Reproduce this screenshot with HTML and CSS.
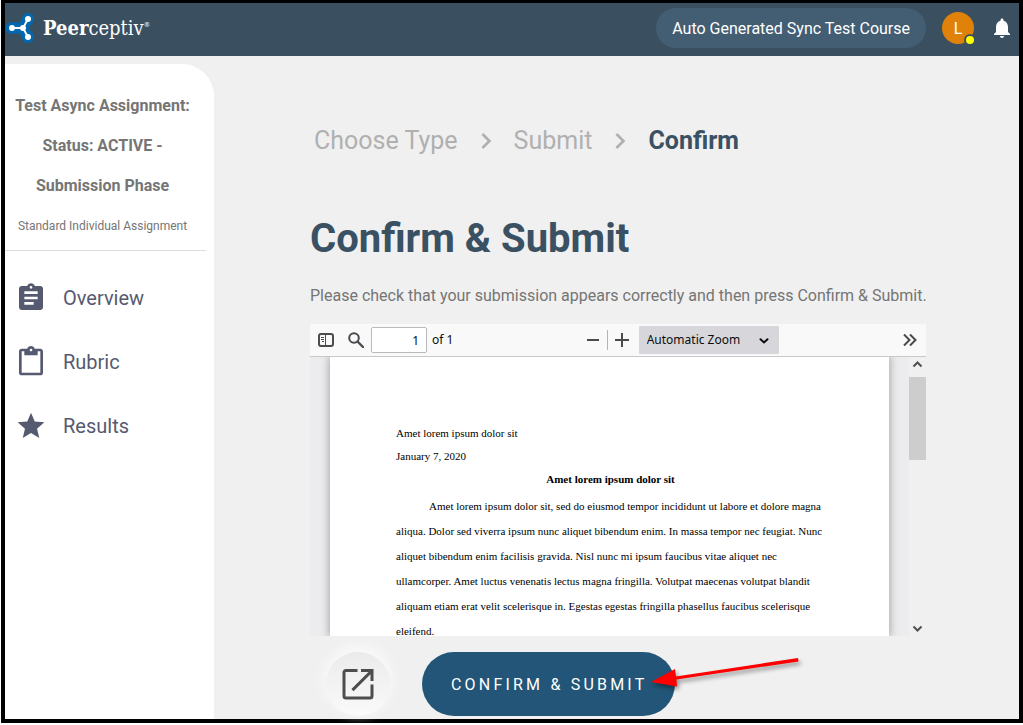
FILE: index.html
```html
<!DOCTYPE html>
<html lang="en">
<head>
<meta charset="utf-8">
<title>Peerceptiv - Confirm &amp; Submit</title>
<link rel="stylesheet" href="styles.css">
</head>
<body>
<div class="frame">
  <header class="topbar">
    <a class="brand" href="#">
      <svg class="brand-mark" viewBox="0 0 30 32" aria-hidden="true">
        <path d="M6 16 L18 16 Q21 10 23 7 M18 16 Q21 22 23 25" fill="none" stroke="#0568ae" stroke-width="11" stroke-linecap="round" stroke-linejoin="round"/>
        <circle cx="7" cy="16" r="6" fill="#0568ae"/>
        <circle cx="23" cy="7" r="6" fill="#0568ae"/>
        <circle cx="23" cy="25" r="6" fill="#0568ae"/>
        <path d="M7 16 H18 L23 7 M18 16 L23 25" fill="none" stroke="#fff" stroke-width="2"/>
        <circle cx="7" cy="16" r="3" fill="#fff"/>
        <circle cx="18" cy="16" r="3" fill="#fff"/>
        <circle cx="23" cy="7" r="3" fill="#fff"/>
        <circle cx="23" cy="25" r="3" fill="#fff"/>
      </svg>
      <span class="brand-name"><b>Peer</b>ceptiv<sup>®</sup></span>
    </a>
    <div class="top-actions">
      <button class="course" type="button">Auto Generated Sync Test Course</button>
      <button class="avatar" type="button" aria-label="Account">L<span class="presence"></span></button>
      <button class="bell" type="button" aria-label="Notifications">
        <svg viewBox="0 0 24 24"><path d="M12 22c1.100 0 2-.9 2-2h-4c0 1.100.9 2 2 2zm6-6v-5c0-3.070-1.630-5.640-4.500-6.320V4c0-.83-.67-1.500-1.500-1.500s-1.500.67-1.500 1.500v.68C7.640 5.360 6 7.920 6 11v5l-2 2v1h16v-1l-2-2z"/></svg>
      </button>
    </div>
  </header>
  <div class="layout">
    <aside class="sidebar">
      <div class="summary">
        <p class="summary-line">Test Async Assignment:</p>
        <p class="summary-line">Status: ACTIVE -</p>
        <p class="summary-line">Submission Phase</p>
        <p class="summary-kind">Standard Individual Assignment</p>
      </div>
      <nav class="nav">
        <a href="#"><svg viewBox="0 0 24 24"><path d="M19 3h-4.180C14.400 1.840 13.300 1 12 1s-2.400.84-2.820 2H5c-1.100 0-2 .9-2 2v14c0 1.100.9 2 2 2h14c1.100 0 2-.9 2-2V5c0-1.100-.9-2-2-2zm-7 0c.55 0 1 .45 1 1s-.45 1-1 1-1-.45-1-1 .45-1 1-1zm2 14H7v-2h7v2zm3-4H7v-2h10v2zm0-4H7V7h10v2z"/></svg>Overview</a>
        <a href="#"><svg viewBox="0 0 24 24"><path d="M19 2h-4.180C14.400.84 13.300 0 12 0S9.600.84 9.180 2H5c-1.100 0-2 .9-2 2v16c0 1.100.9 2 2 2h14c1.100 0 2-.9 2-2V4c0-1.100-.9-2-2-2zm-7 0c.55 0 1 .45 1 1s-.45 1-1 1-1-.45-1-1 .45-1 1-1zm7 18H5V4h2v3h10V4h2v16z"/></svg>Rubric</a>
        <a href="#"><svg viewBox="0 0 24 24"><path d="M12 17.270L18.180 21l-1.640-7.030L22 9.240l-7.190-.61L12 2 9.190 8.630 2 9.240l5.460 4.730L5.820 21z"/></svg>Results</a>
      </nav>
    </aside>
    <main class="main">
      <nav class="steps" aria-label="Progress">
        <a href="#">Choose Type</a>
        <svg viewBox="0 0 24 24"><path d="M10 6L8.590 7.410 13.170 12l-4.580 4.590L10 18l6-6z"/></svg>
        <a href="#">Submit</a>
        <svg viewBox="0 0 24 24"><path d="M10 6L8.590 7.410 13.170 12l-4.580 4.590L10 18l6-6z"/></svg>
        <strong>Confirm</strong>
      </nav>
      <h1>Confirm &amp; Submit</h1>
      <p class="hint">Please check that your submission appears correctly and then press Confirm &amp; Submit.</p>
      <section class="viewer">
        <div class="toolbar">
          <button class="tool" type="button" aria-label="Toggle sidebar"><svg viewBox="0 0 16 16"><rect x="1" y="2" width="14" height="12" rx="2" fill="none" stroke="#4a4a4f" stroke-width="2"/><path d="M7.500 2v12" stroke="#4a4a4f"/><path d="M3 5.500h3M3 7.500h3M4 9.500h2" stroke="#4a4a4f"/></svg></button>
          <button class="tool" type="button" aria-label="Find"><svg viewBox="0 0 16 16"><circle cx="6" cy="6" r="4.800" fill="none" stroke="#4a4a4f" stroke-width="2"/><path d="M9.500 9.500L15 15" stroke="#4a4a4f" stroke-width="2.400" stroke-linecap="round"/></svg></button>
          <input id="page" class="page-number" type="text" value="1">
          <label class="page-total" for="page">of 1</label>
          <div class="zoom">
            <button class="tool" type="button" aria-label="Zoom out"><svg viewBox="0 0 16 16"><path d="M2 8h12" stroke="#4a4a4f" stroke-width="2"/></svg></button>
            <span class="split"></span>
            <button class="tool" type="button" aria-label="Zoom in"><svg viewBox="0 0 16 16"><path d="M1 8h14M8 1v14" stroke="#4a4a4f" stroke-width="2"/></svg></button>
            <div class="scale">
              <select aria-label="Zoom level"><option>Automatic Zoom</option></select>
              <svg viewBox="0 0 10 6"><path d="M1.500 1.200L5 4.500 8.500 1.200" fill="none" stroke="#0c0c0d" stroke-width="2" stroke-linecap="round"/></svg>
            </div>
          </div>
          <button class="tool more" type="button" aria-label="Tools"><svg viewBox="0 0 16 16"><path d="M2 2.500L7.500 8 2 13.500M8 2.500L13.500 8 8 13.500" fill="none" stroke="#4a4a4f" stroke-width="2"/></svg></button>
        </div>
        <div class="pages">
          <div class="canvas">
            <article class="paper">
              <p>Amet lorem ipsum dolor sit</p>
              <p>January 7, 2020</p>
              <h2>Amet lorem ipsum dolor sit</h2>
              <p class="body-text">Amet lorem ipsum dolor sit, sed do eiusmod tempor incididunt ut labore et dolore magna aliqua. Dolor sed viverra ipsum nunc aliquet bibendum enim. In massa tempor nec feugiat. Nunc aliquet bibendum enim facilisis gravida. Nisl nunc mi ipsum faucibus vitae aliquet nec ullamcorper. Amet luctus venenatis lectus magna fringilla. Volutpat maecenas volutpat blandit aliquam etiam erat velit scelerisque in. Egestas egestas fringilla phasellus faucibus scelerisque eleifend.</p>
            </article>
          </div>
          <div class="scrollbar">
            <svg viewBox="0 0 17 14"><path d="M4.500 9.500L8.500 5.500l4 4" fill="none" stroke="#505050" stroke-width="2"/></svg>
            <span class="thumb"></span>
            <svg class="down" viewBox="0 0 17 14"><path d="M4.500 4.500l4 4 4-4" fill="none" stroke="#505050" stroke-width="2"/></svg>
          </div>
        </div>
      </section>
      <div class="actions">
        <button class="open" type="button" aria-label="Open in new window"><svg viewBox="0 0 32 32"><path d="M15.500 2.500H4A2 2 0 0 0 2 4.500V28A2 2 0 0 0 4 30H28A2 2 0 0 0 30 28V16.500" fill="none" stroke="#4d4d4d" stroke-width="3"/><path d="M19 1H31.500V13H28.500V6.200L11.500 23.200 9.400 21.100 26.500 4H19z" fill="#4d4d4d"/></svg></button>
        <div class="confirm-wrap">
          <button class="confirm" type="button">Confirm &amp; Submit</button>
          <svg class="arrow" viewBox="0 0 160 48" aria-hidden="true"><path d="M149 7L27 25.500 26 18 2 31 28 35.500 27.500 28.500 149.500 10.500z" fill="#f00"/></svg>
        </div>
      </div>
    </main>
  </div>
</div>
</body>
</html>
```
FILE: styles.css
```css
* { box-sizing: border-box; }
body {
  margin: 0;
  background: #fff;
  color: #757575;
  font: 16px/20px Roboto, "Liberation Sans", sans-serif;
}
p, h1, h2 { margin: 0; }
a { color: inherit; text-decoration: none; }
svg { display: block; }
button { padding: 0; border: 0; background: none; color: inherit; font: inherit; cursor: pointer; }

.frame {
  display: flex;
  flex-direction: column;
  min-height: calc(100vh - 2px);
  margin: 0 0 2px 1px;
  border: 4px solid #000;
  border-top-width: 3px;
  background: #f0f0f0;
}

.topbar {
  display: flex;
  align-items: center;
  justify-content: space-between;
  padding: 5px 5px 8px 0;
  background: #3a5060;
  color: #fff;
}
.brand { display: flex; align-items: center; gap: 8px; }
.brand-mark { width: 30px; height: 32px; }
.brand-name { font: 20px/24px "DejaVu Serif Condensed", "DejaVu Serif", serif; }
.brand-name sup { font-size: 7px; line-height: 0; vertical-align: 8px; }
.top-actions { display: flex; align-items: center; gap: 16px; }
.course { height: 40px; padding: 1px 16px 0; border-radius: 20px; background: #435d73; }
.avatar { position: relative; width: 32px; height: 32px; padding-top: 1px; border-radius: 50%; background: #e0820a; }
.presence {
  position: absolute;
  right: -2px;
  bottom: -2px;
  width: 12px;
  height: 12px;
  border: 2px solid #3a5060;
  border-radius: 50%;
  background: #ff0;
}
.bell svg { width: 24px; height: 24px; fill: #fff; }

.layout { display: flex; flex: 1; }
.sidebar {
  flex: none;
  width: 209px;
  margin-top: 8px;
  padding: 22px 8px 0 0;
  border-top-right-radius: 32px;
  background: #fff;
}
.summary { padding: 0 6px 4px 0; border-bottom: 1px solid #dcdcdc; text-align: center; line-height: 40px; }
.summary-line { font-weight: 700; }
.summary-kind { font-size: 12px; }
.nav { padding: 15px 0 0 10px; color: #565a70; font-size: 20px; }
.nav a { display: flex; align-items: center; gap: 16px; height: 64px; }
.nav svg { width: 32px; height: 32px; fill: #565a70; }

.main { flex: 1; min-width: 0; padding: 69px 93px 3px 96px; }
.steps { display: flex; align-items: center; gap: 12px; padding-left: 4px; color: #b0b0b0; font-size: 25px; line-height: 32px; }
.steps svg { width: 32px; height: 32px; fill: #b0b0b0; }
.steps strong { color: #3a5163; }
h1 { margin-top: 58px; color: #3a5163; font-size: 40px; line-height: 48px; }
.hint { margin: 23px 0 18px; white-space: nowrap; }

.viewer { color: #0c0c0d; }
.toolbar {
  display: flex;
  align-items: center;
  height: 33px;
  padding: 0 8px;
  border-bottom: 1px solid #c8c8c8;
  background: #f9f9fa;
  font: 12px/16px "Noto Sans", sans-serif;
}
.tool { margin-right: 14px; }
.tool svg { width: 16px; height: 16px; }
.page-number {
  width: 56px;
  height: 26px;
  margin-left: -7px;
  padding: 0 7px;
  border: 1px solid #bababc;
  border-radius: 2px;
  background: #fff;
  color: inherit;
  font: inherit;
  text-align: right;
}
.page-total { padding-left: 5px; }
.zoom { display: flex; align-items: center; margin: 0 auto; padding-left: 2px; }
.zoom .tool { margin: 0 6px; }
.split { width: 1px; height: 20px; background: #b4b4b6; }
.scale { position: relative; margin-left: 3px; }
.scale select {
  appearance: none;
  width: 140px;
  height: 28px;
  padding: 0 8px;
  border: 0;
  border-radius: 1px;
  background: #d7d7db;
  color: inherit;
  font: inherit;
}
.scale svg { position: absolute; right: 10px; top: 12px; width: 10px; height: 6px; }
.more { margin-right: 0; }

.pages { display: flex; height: 279px; overflow: hidden; }
.canvas { flex: 1; padding: 0 20px; background: #ececee; }
.paper {
  height: 100%;
  padding: 65px 64px 0 66px;
  background: #fff;
  box-shadow: 0 0 8px 1px rgba(0, 0, 0, 0.3);
  clip-path: inset(0 -20px);
  color: #000;
  font: 11px/23px "Liberation Serif", "Times New Roman", serif;
}
.paper h2 { font-size: 11px; line-height: 23px; text-align: center; }
.body-text { margin-top: 3px; line-height: 25px; text-indent: 33px; }
.scrollbar { display: flex; flex-direction: column; width: 17px; background: #f0f0f0; }
.scrollbar svg { width: 17px; height: 14px; }
.thumb { height: 83px; margin-top: 6px; background: #cdcdcd; }
.scrollbar .down { margin-top: auto; }

.actions { display: flex; gap: 32px; padding: 16px 16px 0; }
.open {
  display: grid;
  place-items: center;
  width: 64px;
  height: 64px;
  border-radius: 50%;
  background: linear-gradient(#ebebeb, #fafafa);
  box-shadow: 0 -4px 12px 2px #fafafa;
}
.open svg { width: 32px; height: 32px; }
.confirm-wrap { position: relative; }
.confirm {
  height: 64px;
  padding: 1px 28px 0 29px;
  border-radius: 32px;
  background: #225577;
  color: #fff;
  letter-spacing: 0.2em;
  text-transform: uppercase;
}
.arrow {
  position: absolute;
  left: 227px;
  top: -1px;
  width: 160px;
  height: 48px;
  filter: drop-shadow(2px 3px 2px rgba(0, 0, 0, 0.4));
  pointer-events: none;
}
```
